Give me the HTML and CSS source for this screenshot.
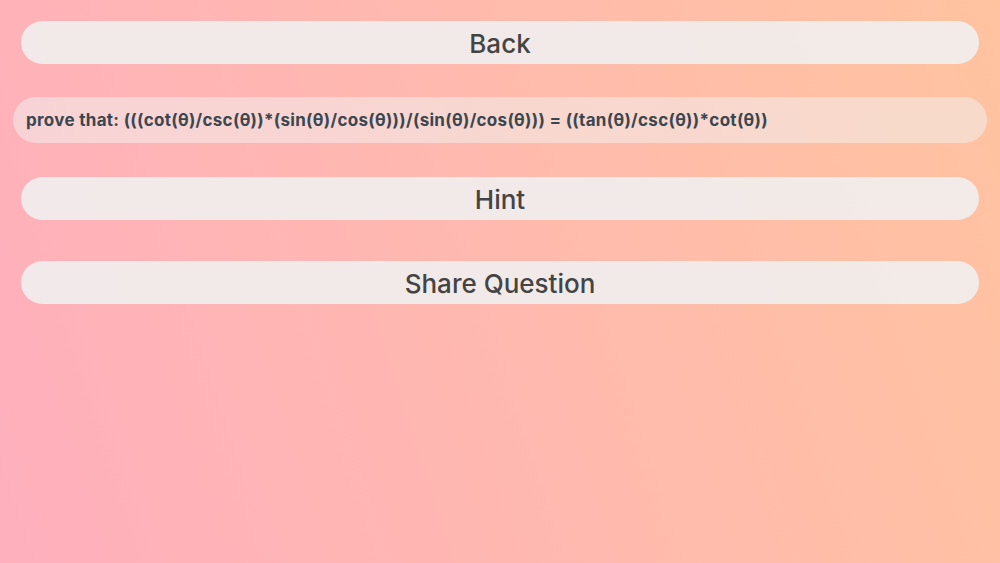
FILE: index.html
```html
<!DOCTYPE html>
<html lang="en">

<head>
    <meta charset="UTF-8">
    <meta name="viewport" content="width=device-width, initial-scale=1.0">
    <title>Question</title>
    <link rel="stylesheet" href="styles.css">
</head>

<body>
    <div id="container">
        <button class="pill-button back-button">Back</button>
        <div class="question-box">
            <p class="question-text">prove that: (((cot(θ)/csc(θ))*(sin(θ)/cos(θ)))/(sin(θ)/cos(θ))) = ((tan(θ)/csc(θ))*cot(θ))</p>
        </div>
        <button class="pill-button hint-button">Hint</button>
        <button class="pill-button share-button">Share Question</button>
    </div>
</body>

</html>
```

FILE: styles.css
```css
html,
body {
    height: 100%;
}

body {
    margin: 0;
    padding: 0;
    background: linear-gradient(72deg, #ffafbd, #ffc3a0);
    font-family: Inter, "Open Sans", sans-serif;
    overflow: hidden;
}

#container {
    display: flex;
    flex-direction: column;
    padding: 21px 13px;
}

.pill-button {
    margin: 0 8px;
    height: 43px;
    border: none;
    border-radius: 22px;
    background-color: rgba(240, 240, 240, 0.88);
    color: #444;
    font-family: Inter, "Open Sans", sans-serif;
    font-size: 26px;
    font-weight: 500;
    padding-top: 2px;
    cursor: pointer;
}

.question-box {
    margin-top: 33px;
    height: 46px;
    border-radius: 23px;
    background-color: rgba(242, 238, 236, 0.55);
    display: flex;
    align-items: center;
    padding: 0 13px;
}

.question-text {
    margin: 0;
    color: #3a4750;
    font-size: 17px;
    font-weight: 700;
    letter-spacing: 0.3px;
}

.hint-button {
    margin-top: 34px;
}

.share-button {
    margin-top: 41px;
}
```
